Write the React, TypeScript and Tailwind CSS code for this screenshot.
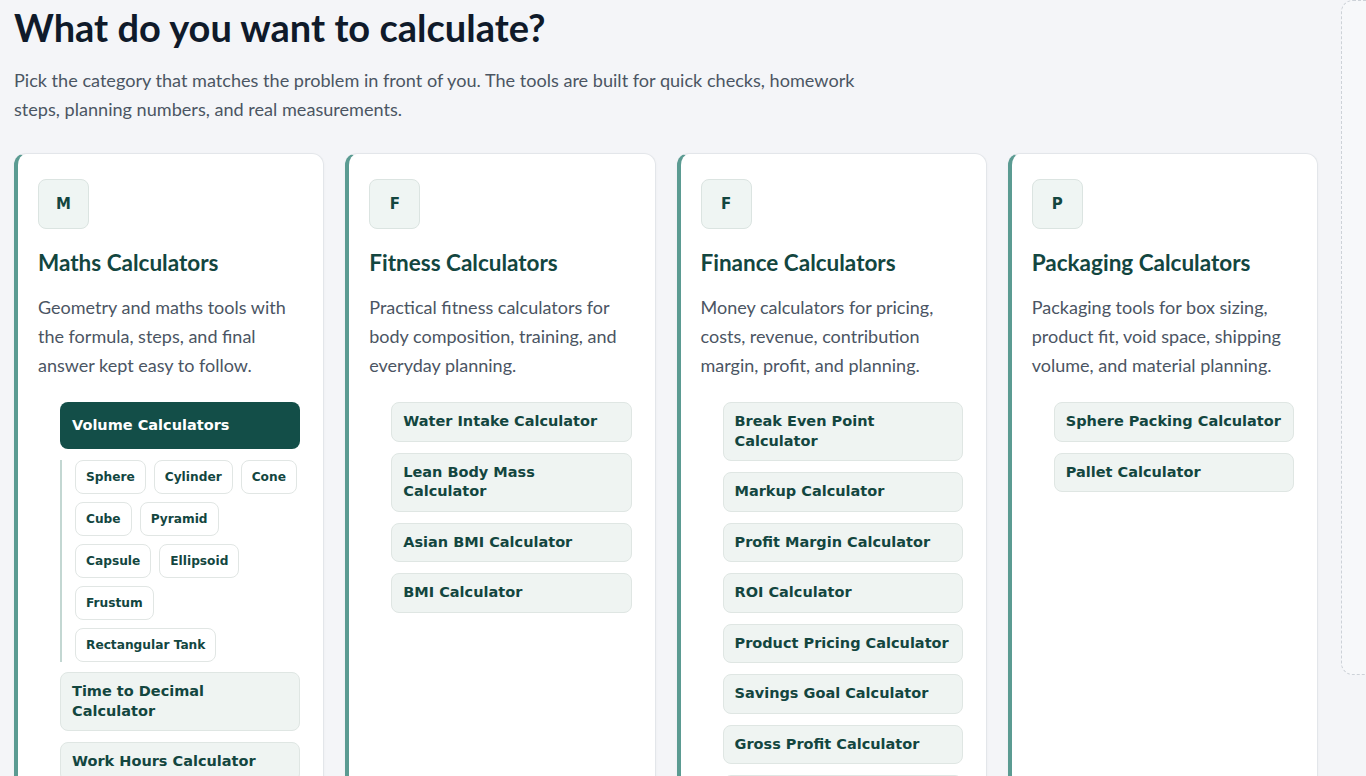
import React from "react";

type Cat = {
  letter: string;
  title: string;
  desc: string;
  items: string[];
  volume?: boolean;
};

const cats: Cat[] = [
  {
    letter: "M",
    title: "Maths Calculators",
    desc: "Geometry and maths tools with the formula, steps, and final answer kept easy to follow.",
    items: ["Time to Decimal Calculator", "Work Hours Calculator", "Percentage Calculator"],
    volume: true,
  },
  {
    letter: "F",
    title: "Fitness Calculators",
    desc: "Practical fitness calculators for body composition, training, and everyday planning.",
    items: ["Water Intake Calculator", "Lean Body Mass Calculator", "Asian BMI Calculator", "BMI Calculator"],
  },
  {
    letter: "F",
    title: "Finance Calculators",
    desc: "Money calculators for pricing, costs, revenue, contribution margin, profit, and planning.",
    items: [
      "Break Even Point Calculator",
      "Markup Calculator",
      "Profit Margin Calculator",
      "ROI Calculator",
      "Product Pricing Calculator",
      "Savings Goal Calculator",
      "Gross Profit Calculator",
      "Contribution Margin Calculator",
    ],
  },
  {
    letter: "P",
    title: "Packaging Calculators",
    desc: "Packaging tools for box sizing, product fit, void space, shipping volume, and material planning.",
    items: ["Sphere Packing Calculator", "Pallet Calculator"],
  },
];

const chips = [
  ["Sphere", "Cylinder", "Cone"],
  ["Cube", "Pyramid"],
  ["Capsule", "Ellipsoid"],
  ["Frustum"],
  ["Rectangular Tank"],
];

const heavy = { fontFamily: '"DejaVu Sans", Verdana, sans-serif' };
const lato = { fontFamily: '"Lato", "Noto Sans", sans-serif' };

function Item({ label }: { label: string }) {
  return (
    <div
      className="rounded-lg border border-[#dfe6e3] bg-[#eff4f2] px-[11px] py-[9px] text-[14.5px] font-bold leading-[19.5px] text-[#13463f]"
      style={heavy}
    >
      {label}
    </div>
  );
}

function Card({ c }: { c: Cat }) {
  return (
    <div className="flex min-h-[640px] flex-col rounded-xl border border-[#e3e6ea] border-l-4 border-l-[#5b9b92] bg-white pl-5 pr-[23px] pt-[25px] pb-6 shadow-[0_1px_3px_rgba(15,23,42,0.04)]">
      <div
        className="flex h-[50px] w-[51px] items-center justify-center rounded-lg border border-[#dbe4e1] bg-[#eff5f3] text-[15px] font-bold text-[#13463f]"
        style={heavy}
      >
        {c.letter}
      </div>
      <h2 className="mt-[20px] text-[22.5px] font-bold leading-[28px] text-[#13463f]" style={lato}>
        {c.title}
      </h2>
      <p className="mt-[16px] text-[18px] leading-[29px] text-[#4b5563]" style={lato}>
        {c.desc}
      </p>
      <div className="ml-[22px] mt-[22px] flex flex-col gap-[11px]">
        {c.volume && (
          <>
            <div
              className="rounded-lg bg-[#134e48] px-[12px] py-[13px] text-[14.5px] font-bold leading-[21px] text-white"
              style={heavy}
            >
              Volume Calculators
            </div>
            <div className="-mb-[1px] flex flex-col gap-2 border-l-2 border-[#c3d7d2] pl-[13px]">
              {chips.map((row, i) => (
                <div key={i} className="flex gap-2">
                  {row.map((ch) => (
                    <div
                      key={ch}
                      className="rounded-lg border border-[#e1e6e4] bg-white px-[10px] py-[6px] text-[12.2px] font-bold leading-[20px] text-[#13463f]"
                      style={heavy}
                    >
                      {ch}
                    </div>
                  ))}
                </div>
              ))}
            </div>
          </>
        )}
        {c.items.map((it) => (
          <Item key={it} label={it} />
        ))}
      </div>
    </div>
  );
}

export default function App() {
  return (
    <div className="flex h-[776px] w-full overflow-hidden bg-[#f4f5f8]">
      <main className="w-[1318px] shrink-0 pl-[14px] pt-[4px]">
        <h1 className="text-[38px] font-bold leading-[46px] text-[#0f1a2a]" style={lato}>
          What do you want to calculate?
        </h1>
        <p className="mt-[16px] max-w-[880px] text-[18.1px] leading-[29px] text-[#4b5563]" style={lato}>
          Pick the category that matches the problem in front of you. The tools are built for quick checks, homework
          <br />
          steps, planning numbers, and real measurements.
        </p>
        <div className="mt-[29px] grid w-[1304px] grid-cols-4 gap-[21px]">
          {cats.map((c) => (
            <Card key={c.title} c={c} />
          ))}
        </div>
      </main>
      <aside className="ml-[23px] h-[675px] w-[300px] shrink-0 rounded-xl border border-dashed border-[#cdd2d8] bg-[#f7f8fa]" />
    </div>
  );
}
